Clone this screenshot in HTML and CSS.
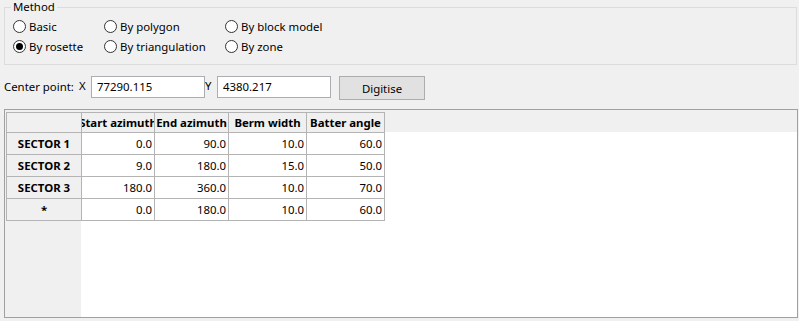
FILE: index.html
```html
<!DOCTYPE html>
<html lang="en">
<head>
  <meta charset="UTF-8" />
  <title>Rosette</title>
  <link rel="stylesheet" href="styles.css">
</head>
<body>
  <fieldset class="method">
    <legend>Method</legend>
    <div class="radios">
      <label class="radio"><span class="dot"></span>Basic</label>
      <label class="radio"><span class="dot"></span>By polygon</label>
      <label class="radio"><span class="dot"></span>By block model</label>
      <label class="radio"><span class="dot checked"></span>By rosette</label>
      <label class="radio"><span class="dot"></span>By triangulation</label>
      <label class="radio"><span class="dot"></span>By zone</label>
    </div>
  </fieldset>

  <div class="center-row">
    <span class="pt-label">Center point:</span>
    <span class="axis">X</span>
    <div class="field">77290.115</div>
    <span class="axis">Y</span>
    <div class="field">4380.217</div>
    <button class="btn">Digitise</button>
  </div>

  <div class="panel">
    <div class="grid">
      <div class="cell corner"></div>
      <div class="cell head"><span>Start azimuth</span></div>
      <div class="cell head"><span>End azimuth</span></div>
      <div class="cell head"><span>Berm width</span></div>
      <div class="cell head"><span>Batter angle</span></div>

      <div class="cell rowhead">SECTOR 1</div>
      <div class="cell num">0.0</div>
      <div class="cell num">90.0</div>
      <div class="cell num">10.0</div>
      <div class="cell num">60.0</div>

      <div class="cell rowhead">SECTOR 2</div>
      <div class="cell num">9.0</div>
      <div class="cell num">180.0</div>
      <div class="cell num">15.0</div>
      <div class="cell num">50.0</div>

      <div class="cell rowhead">SECTOR 3</div>
      <div class="cell num">180.0</div>
      <div class="cell num">360.0</div>
      <div class="cell num">10.0</div>
      <div class="cell num">70.0</div>

      <div class="cell rowhead">*</div>
      <div class="cell num">0.0</div>
      <div class="cell num">180.0</div>
      <div class="cell num">10.0</div>
      <div class="cell num">60.0</div>
    </div>
  </div>
</body>
</html>
```

FILE: styles.css
```css
body, html {
  margin: 0;
  padding: 0;
  background-color: #f0f0f0;
  font-family: 'Noto Sans', 'Open Sans', sans-serif;
  font-size: 11.4px;
  color: #000;
}

.method {
  margin: 0 2px 0 4px;
  padding: 2px 0 8px 6px;
  border: 1px solid #dcdcdc;
  min-width: 0;
}

.method legend {
  padding: 0 2px;
  line-height: 14px;
}

.radios {
  display: grid;
  grid-template-columns: 91px 121px auto;
  grid-auto-rows: 20px;
  margin-left: 2px;
}

.radio {
  display: flex;
  align-items: center;
  gap: 3px;
  white-space: nowrap;
}

.dot {
  width: 11px;
  height: 11px;
  border: 1px solid #333;
  border-radius: 50%;
  background: #fff;
  display: flex;
  align-items: center;
  justify-content: center;
}

.dot.checked::after {
  content: "";
  width: 7px;
  height: 7px;
  border-radius: 50%;
  background: #000;
}

.center-row {
  display: flex;
  align-items: flex-start;
  margin-top: 11px;
  padding-left: 4px;
  height: 24px;
}

.pt-label {
  width: 75px;
  line-height: 21px;
  white-space: nowrap;
}

.axis {
  width: 12px;
  line-height: 19px;
}

.field {
  box-sizing: border-box;
  width: 114px;
  height: 22px;
  border: 1px solid #abadb3;
  background: #fff;
  padding-left: 5px;
  line-height: 20px;
}

.btn {
  box-sizing: border-box;
  margin-left: 8px;
  width: 86px;
  height: 24px;
  border: 1px solid #adadad;
  background: #e1e1e1;
  font: inherit;
  color: #000;
  padding: 0;
}

.panel {
  box-sizing: border-box;
  margin: 9px 1px 0 4px;
  height: 209px;
  border: 1px solid #a0a0a0;
  padding: 2px 0 0 1px;
  background:
    linear-gradient(#f0f0f0, #f0f0f0) left top / 76px 100% no-repeat,
    linear-gradient(#f0f0f0, #f0f0f0) left top / 100% 22px no-repeat,
    #fff;
}

.grid {
  display: inline-grid;
  grid-template-columns: 75px 73px 74px 78px 78px;
  grid-template-rows: 20px repeat(4, 22px);
  border-left: 1px solid #b4b4b4;
  border-top: 1px solid #b4b4b4;
}

.cell {
  box-sizing: border-box;
  border-right: 1px solid #b4b4b4;
  border-bottom: 1px solid #b4b4b4;
  display: flex;
  align-items: center;
  overflow: hidden;
  white-space: nowrap;
  background: #fff;
}

.corner, .head, .rowhead {
  background: #f0f0f0;
  font-weight: bold;
  justify-content: center;
}

.num {
  justify-content: flex-end;
  padding-right: 2px;
}
```
